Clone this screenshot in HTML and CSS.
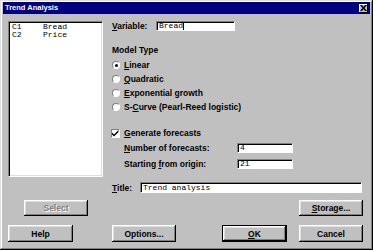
FILE: index.html
```html
<!DOCTYPE html>
<html lang="en">
<head>
  <meta charset="UTF-8">
  <title>Trend Analysis</title>
  <link rel="stylesheet" href="styles.css">
</head>
<body>

  <div class="window">
    <div class="titlebar">
      <span class="title">Trend Analysis</span>
      <span class="close-btn">
        <svg width="7" height="6" viewBox="0 0 7 6"><path d="M0 0h2l1.5 2 1.5-2h2l-2.5 3 2.5 3h-2l-1.5-2-1.5 2h-2l2.5-3z" fill="#000"/></svg>
      </span>
    </div>

    <div class="content">
      <div class="top-row">
        <div class="listbox">
          <div class="list-item"><span class="col">C1</span><span>Bread</span></div>
          <div class="list-item"><span class="col">C2</span><span>Price</span></div>
        </div>

        <div class="panel">
          <div class="field-row">
            <label class="lbl var-lbl"><u>V</u>ariable:</label>
            <div class="textbox var-box">Bread<span class="caret"></span></div>
          </div>

          <div class="group-title">Model Type</div>
          <div class="option"><span class="radio checked"></span><u>L</u>inear</div>
          <div class="option"><span class="radio"></span><u>Q</u>uadratic</div>
          <div class="option"><span class="radio"></span><u>E</u>xponential growth</div>
          <div class="option"><span class="radio"></span>S-<u>C</u>urve (Pearl-Reed logistic)</div>

          <div class="option check-row">
            <span class="checkbox">
              <svg width="7" height="7" viewBox="0 0 7 7"><path d="M0 2.5l2 2 4.5-4.5v2l-4.5 4.5-2-2z" fill="#000"/></svg>
            </span><u>G</u>enerate forecasts
          </div>
          <div class="sub-row">
            <label class="lbl sub-lbl"><u>N</u>umber of forecasts:</label>
            <div class="textbox small-box">4</div>
          </div>
          <div class="sub-row">
            <label class="lbl sub-lbl">Starting <u>f</u>rom origin:</label>
            <div class="textbox small-box">21</div>
          </div>

          <div class="field-row title-row">
            <label class="lbl title-lbl"><u>T</u>itle:</label>
            <div class="textbox title-box">Trend analysis</div>
          </div>
        </div>
      </div>

      <div class="button-row">
        <button class="btn select-btn" disabled>Select</button>
        <button class="btn storage-btn"><u>S</u>torage...</button>
      </div>

      <div class="button-row bottom-row">
        <button class="btn">Help</button>
        <button class="btn options-btn">Options...</button>
        <button class="btn ok-btn default"><u>O</u>K</button>
        <button class="btn cancel-btn">Cancel</button>
      </div>
    </div>
  </div>

</body>
</html>
```

FILE: styles.css
```css
body {
  margin: 0;
  padding: 0;
  font-family: "Liberation Sans", Arial, sans-serif;
  background-color: #c0c0c0;
}

.window {
  width: 373px;
  height: 250px;
  box-sizing: border-box;
  padding: 2px 3px;
  background-color: #c0c0c0;
  box-shadow: inset -1px -1px #000, inset 1px 1px #dfdfdf, inset -2px -2px #808080, inset 2px 2px #fff;
}

.titlebar {
  height: 12px;
  background-color: #000080;
  display: flex;
  align-items: center;
  justify-content: space-between;
  padding: 0 2px;
}

.title {
  color: #fff;
  font-weight: bold;
  font-size: 7.5px;
  line-height: 12px;
}

.close-btn {
  width: 9px;
  height: 9px;
  box-sizing: border-box;
  background-color: #c0c0c0;
  display: flex;
  align-items: center;
  justify-content: center;
  box-shadow: inset -1px -1px #000, inset 1px 1px #fff;
}

.content {
  padding: 7px 7px 0 5px;
}

.top-row {
  display: flex;
  height: 173px;
}

/* list of columns */
.listbox {
  width: 95px;
  height: 156px;
  box-sizing: border-box;
  background: #fff;
  border: 1px solid;
  border-color: #808080 #fff #fff #808080;
  box-shadow: inset 1px 1px #000, inset -1px -1px #dfdfdf;
  padding: 1px 3px;
  font-family: "Liberation Mono", "Courier New", monospace;
  font-size: 8px;
}

.list-item {
  display: flex;
  line-height: 7.5px;
}

.list-item .col {
  width: 31px;
}

.panel {
  margin-left: 9px;
  flex: 1;
}

.lbl {
  font-weight: bold;
  font-size: 8.5px;
}

.field-row {
  display: flex;
  align-items: center;
  height: 10px;
}

.var-lbl {
  width: 44px;
}

.textbox {
  height: 10px;
  box-sizing: border-box;
  background: #fff;
  border: 1px solid;
  border-color: #808080 #fff #fff #808080;
  box-shadow: inset 1px 1px #000;
  padding: 0 2px;
  font-family: "Liberation Mono", "Courier New", monospace;
  font-size: 8px;
  line-height: 8px;
  display: flex;
  align-items: center;
}

.var-box {
  width: 79px;
}

.caret {
  display: inline-block;
  width: 1px;
  height: 7px;
  background: #000;
}

.group-title {
  font-weight: bold;
  font-size: 8.5px;
  line-height: 10px;
  margin-top: 14px;
  margin-bottom: 3px;
}

.option {
  display: flex;
  align-items: center;
  height: 14px;
  font-weight: bold;
  font-size: 8.5px;
  padding-left: 0;
}

.radio {
  width: 8px;
  height: 8px;
  box-sizing: border-box;
  border-radius: 50%;
  background: #fff;
  border: 1px solid;
  border-color: #808080 #fff #fff #808080;
  margin: 0 4px 0 0;
  position: relative;
}

.radio.checked::after {
  content: "";
  position: absolute;
  left: 1.5px;
  top: 1.5px;
  width: 3px;
  height: 3px;
  border-radius: 50%;
  background: #000;
}

.check-row {
  margin-top: 12px;
}

.checkbox {
  width: 9px;
  height: 9px;
  box-sizing: border-box;
  background: #fff;
  border: 1px solid;
  border-color: #808080 #fff #fff #808080;
  display: flex;
  align-items: center;
  justify-content: center;
  margin: 0 4px 0 -1px;
}

.sub-row {
  display: flex;
  align-items: center;
  height: 16px;
  padding-left: 12px;
}

.sub-lbl {
  width: 113px;
}

.small-box {
  width: 56px;
}

.title-row {
  margin-top: 10px;
  height: 11px;
}

.title-lbl {
  width: 28px;
}

.title-box {
  width: 222px;
  height: 11px;
}

.button-row {
  display: flex;
  margin-top: 6px;
}

.btn {
  height: 16px;
  width: 64px;
  box-sizing: border-box;
  padding: 0;
  border: none;
  background: #c0c0c0;
  font-family: "Liberation Sans", Arial, sans-serif;
  font-weight: bold;
  font-size: 8.5px;
  color: #000;
  box-shadow: inset -1px -1px #000, inset 1px 1px #fff, inset -2px -2px #808080, inset 2px 2px #dfdfdf;
}

.select-btn {
  margin-left: 16px;
  color: #808080;
  text-shadow: 1px 1px #fff;
}

.storage-btn {
  margin-left: auto;
}

.bottom-row {
  margin-top: 9px;
}

.bottom-row .btn {
  height: 17px;
}

.options-btn {
  margin-left: 39px;
}

.ok-btn {
  margin-left: 46px;
  width: 65px;
}

.cancel-btn {
  margin-left: 12px;
}

.bottom-row .btn:first-child {
  width: 65px;
}

.default {
  border: 1px solid #000;
}
```
